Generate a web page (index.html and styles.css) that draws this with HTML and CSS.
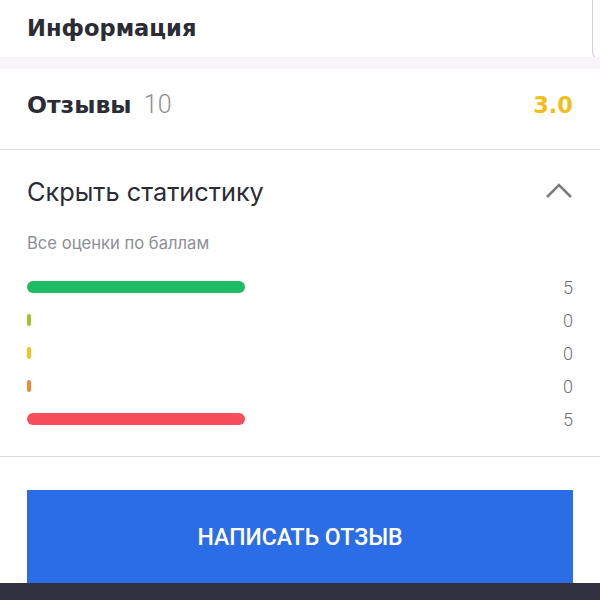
FILE: index.html
```html
<!DOCTYPE html>
<html lang="ru">
<head>
<meta charset="utf-8">
<link rel="stylesheet" href="styles.css">
</head>
<body>
<div class="top">
  <div class="info-card"><h2 class="info-title">Информация</h2></div>
  <div class="next-card"></div>
</div>
<div class="band"></div>
<section class="reviews">
  <div class="reviews-head">
    <div class="reviews-title">Отзывы <span class="reviews-count">10</span></div>
    <div class="reviews-rating">3.0</div>
  </div>
  <div class="stats">
    <div class="stats-toggle">
      <span class="stats-toggle-text">Скрыть статистику</span>
      <svg class="chevron" width="28" height="16" viewBox="0 0 28 16"><path d="M2 14 L14 2 L26 14" fill="none" stroke="#7b7b80" stroke-width="2.6"/></svg>
    </div>
    <div class="stats-sub">Все оценки по баллам</div>
    <div class="bars">
      <div class="bar-row"><div class="bar-track"><div class="bar green" style="width:218px"></div></div><span class="bar-num">5</span></div>
      <div class="bar-row"><div class="bar-track"><div class="bar lime" style="width:4px"></div></div><span class="bar-num">0</span></div>
      <div class="bar-row"><div class="bar-track"><div class="bar yellow" style="width:4px"></div></div><span class="bar-num">0</span></div>
      <div class="bar-row"><div class="bar-track"><div class="bar orange" style="width:4px"></div></div><span class="bar-num">0</span></div>
      <div class="bar-row"><div class="bar-track"><div class="bar red" style="width:218px"></div></div><span class="bar-num">5</span></div>
    </div>
  </div>
  <div class="action">
    <button class="write-btn">НАПИСАТЬ ОТЗЫВ</button>
  </div>
</section>
<div class="footer"></div>
</body>
</html>
```
FILE: styles.css
```css
* { box-sizing: border-box; }
html, body { margin: 0; padding: 0; background: #fff; }
body { width: 600px; height: 600px; overflow: hidden; font-family: Roboto, "Liberation Sans", sans-serif; color: #2b2d36; display: flex; flex-direction: column; }

.top { display: flex; height: 57px; }
.info-card { flex: 1; padding-left: 27px; display: flex; align-items: center; padding-bottom: 2px; }
.info-title { margin: 0; font-family: "DejaVu Sans", Inter, sans-serif; font-weight: 700; font-size: 22.6px; color: #2b2c35; }
.next-card { width: 8px; margin-bottom: -3px; border-left: 1px solid #cfcfd4; border-bottom: 1px solid #cfcfd4; border-bottom-left-radius: 8px; }

.band { height: 12px; background: #f8f6f9; }

.reviews-head { height: 81px; display: flex; align-items: center; justify-content: space-between; padding: 0 27px 9px; border-bottom: 1px solid #dcdcdf; }
.reviews-title { font-family: "DejaVu Sans", Inter, sans-serif; font-weight: 700; font-size: 23.5px; color: #2b2c35; }
.reviews-count { font-family: Roboto, sans-serif; font-weight: 300; font-size: 25px; color: #8f9096; margin-left: 4px; }
.reviews-rating { font-family: "DejaVu Sans", Inter, sans-serif; font-weight: 700; font-size: 22.5px; color: #f1bf1c; }

.stats { padding: 0 27px; border-bottom: 1px solid #dcdcdf; height: 307px; }
.stats-toggle { height: 82px; display: flex; align-items: center; justify-content: space-between; }
.stats-toggle-text { font-size: 25.3px; font-family: Inter, sans-serif; font-weight: 400; color: #2b2c35; }
.stats-sub { font-size: 16.6px; color: #8e8f94; line-height: 20px; margin-top: 1px; font-family: Inter, sans-serif; }
.bars { margin-top: 24px; display: flex; flex-direction: column; gap: 13px; }
.bar-row { display: flex; align-items: center; justify-content: space-between; height: 20px; }
.bar-track { flex: 1; display: flex; }
.bar { height: 12px; border-radius: 6px; }
.green { background: #1dbb62; }
.lime { background: #a6be2c; }
.yellow { background: #f1c31b; }
.orange { background: #ec8c36; }
.red { background: #f84d5b; }
.bar-num { font-size: 18px; font-weight: 300; color: #6f7075; width: 20px; text-align: right; }

.action { padding: 33px 27px 0; }
.write-btn { width: 100%; height: 93px; border: none; background: #2b6de6; color: #fff; font-family: Roboto, sans-serif; font-weight: 500; font-size: 23px; display: block; padding: 2px 0 0; }

.footer { flex: 1; background: #30333f; }
```
